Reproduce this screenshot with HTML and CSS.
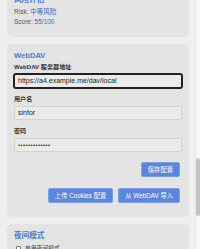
FILE: index.html
```html
<!DOCTYPE html>
<html lang="zh">
<head>
<meta charset="utf-8">
<link rel="stylesheet" href="styles.css">
</head>
<body>
<div class="viewport">
  <div class="content">
    <section class="card">
      <h2 class="card-title">风险评估</h2>
      <p class="stat">Risk: <span class="val">中等风险</span></p>
      <p class="stat">Score: <span class="val">55/100</span></p>
    </section>
    <section class="card">
      <h2 class="card-title">WebDAV</h2>
      <div class="field">
        <label class="label">WebDAV 服务器地址</label>
        <div class="input focused">https://a4.example.me/dav/local</div>
      </div>
      <div class="field">
        <label class="label">用户名</label>
        <div class="input">sinfor</div>
      </div>
      <div class="field">
        <label class="label">密码</label>
        <div class="input pw">•••••••••••••</div>
      </div>
      <div class="actions">
        <button class="btn">保存配置</button>
      </div>
      <div class="actions second">
        <button class="btn">上传 Cookies 配置</button>
        <button class="btn">从 WebDAV 导入</button>
      </div>
    </section>
    <section class="card">
      <h2 class="card-title">夜间模式</h2>
      <label class="check"><span class="box"></span>启用夜间模式</label>
    </section>
  </div>
  <div class="scrollbar"><div class="thumb"></div></div>
</div>
</body>
</html>
```
FILE: styles.css
```css
* { box-sizing: border-box; }
html, body { margin: 0; padding: 0; }
body {
  width: 200px;
  height: 249px;
  overflow: hidden;
  background: #efefef;
  font-family: "Liberation Sans", "Noto Sans CJK SC", sans-serif;
  color: #333;
}
.viewport {
  display: flex;
  height: 249px;
}
.content {
  flex: 1;
  overflow: hidden;
  padding: 0 6px 0 7px;
}
.card {
  background: #e4e4e4;
  border-radius: 5px;
  padding: 7px;
  margin-bottom: 7px;
}
.content .card:first-child { margin-top: -12px; }
.card-title {
  margin: 0 0 3px;
  font-size: 7.6px;
  line-height: 9px;
  font-weight: bold;
  color: #4a7bd4;
}
.stat {
  margin: 0;
  font-size: 6.5px;
  line-height: 10px;
  color: #555;
}
.stat:last-child { margin-bottom: 3px; }
.val { color: #3d66c4; }
.field { margin-bottom: 7px; }
.label {
  display: block;
  font-size: 6.1px;
  line-height: 8px;
  font-weight: bold;
  color: #333;
  margin-bottom: 3px;
}
.input {
  height: 14px;
  border: 1px solid #d2d2d2;
  border-radius: 2px;
  background: #ebebeb;
  font-size: 7px;
  line-height: 12px;
  padding: 0 3px;
  color: #222;
  white-space: nowrap;
  overflow: hidden;
}
.input.focused {
  border-color: #222;
  box-shadow: 0 0 0 1px #222;
}
.input.pw {
  font-size: 6px;
  letter-spacing: 0.4px;
}
.actions {
  display: flex;
  justify-content: flex-end;
  gap: 5px;
  padding-right: 2px;
  margin-top: 10px;
}
.actions.second { margin-top: 11px; margin-bottom: 7px; }
.btn {
  height: 15px;
  padding: 0 6px;
  border: 1px solid #7aa0e6;
  border-radius: 2px;
  background: #5a87db;
  color: #fff;
  font-family: inherit;
  font-size: 6.3px;
  line-height: 13px;
}
.check {
  display: flex;
  align-items: center;
  gap: 4px;
  margin-top: 4px;
  font-size: 5.8px;
  line-height: 8px;
  color: #444;
}
.box {
  width: 5px;
  height: 5px;
  border: 0.5px solid #777;
  background: #fff;
  border-radius: 1px;
  margin-left: 2px;
}
.scrollbar {
  width: 5px;
  background: #f7f7f7;
  border-left: 1px solid #e8e8e8;
}
.thumb {
  margin-top: 158px;
  height: 58px;
  width: 4px;
  background: #c3c3c3;
  border-radius: 2px;
}
```
